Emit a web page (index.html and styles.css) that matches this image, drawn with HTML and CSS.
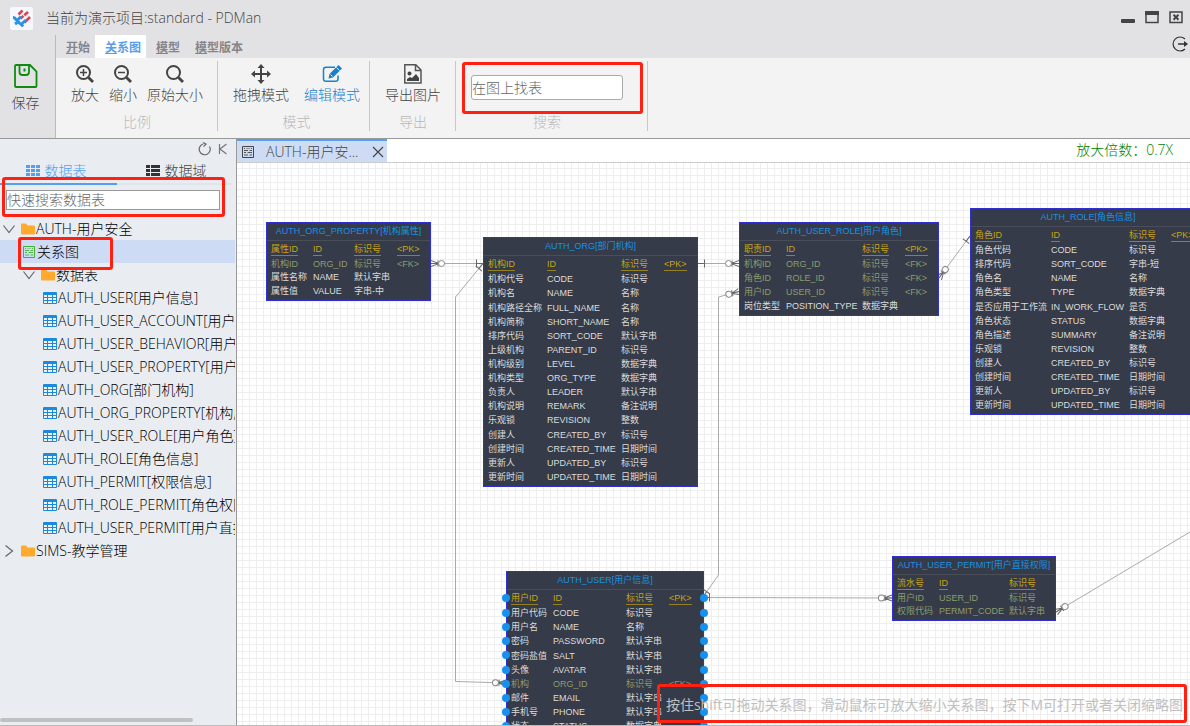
FILE: index.html
```html
<!DOCTYPE html>
<html lang="zh-CN">
<head>
<meta charset="utf-8">
<title>PDMan</title>
<link rel="stylesheet" href="styles.css">
</head>
<body>
<svg class="defs" aria-hidden="true">
  <symbol id="i-table" viewBox="0 0 14 12"><rect x="0" y="0" width="14" height="12" rx="1" fill="#1b8ade"/><path d="M1 3h3v2H1zM5 3h4v2H5zM10 3h3v2h-3zM1 6h3v2H1zM5 6h4v2H5zM10 6h3v2h-3zM1 9h3v2H1zM5 9h4v2H5zM10 9h3v2h-3z" fill="#eef3f8"/></symbol>
  <symbol id="i-folder" viewBox="0 0 14 12"><path d="M0 1.5Q0 .5 1 .5h4l1.5 2H13q1 0 1 1v7q0 1-1 1H1q-1 0-1-1z" fill="#ffa92f"/></symbol>
  <symbol id="i-down" viewBox="0 0 12 12"><path d="M.5 2.5 6 9.500 11.500 2.500" fill="none" stroke="#666" stroke-width="1.200"/></symbol>
  <symbol id="i-right" viewBox="0 0 12 12"><path d="M2.500 .5 9.500 6 2.500 11.500" fill="none" stroke="#666" stroke-width="1.200"/></symbol>
  <symbol id="i-diagram" viewBox="0 0 12 12"><path d="M.5.500h11v11H.5z" fill="none" stroke="currentColor"/><path d="M2.500 2v1M5 2v1M7 2v1M9.500 2v1M2 4.500h4M7.500 4.500H10M2 6.500h2M5.500 6.500H10M2 9h4M7.500 9H10" fill="none" stroke="currentColor" stroke-width=".9"/></symbol>
</svg>

<div class="app">
  <header class="titlebar">
    <svg class="logo" viewBox="0 0 23 23"><rect width="23" height="23" rx="2" fill="#f5f8fc"/><g fill="none" stroke-width="2.600"><path d="M8.500 7.500 12.500 3.500M14.500 15.500 20 10" stroke="#e0414a"/><path d="M10.500 11.500 18 5" stroke="#e0414a" stroke-dasharray="4 1 5"/><path d="M3 10.500q2 0 3 2l4 4q2 1 3 3M7 13.500l4-4M11 17.500l5-4.500M5 17l3-2" stroke="#2c92e8" stroke-width="3"/></g></svg>
    <span class="title">当前为演示项目:standard - PDMan</span>
    <div class="window-buttons">
      <button aria-label="最小化"><svg viewBox="0 0 14 14"><rect y="8" width="14" height="4" rx="1" fill="#444"/></svg></button>
      <button aria-label="最大化"><svg viewBox="0 0 14 14"><path d="M1 1h12v10.500H1z" fill="none" stroke="#444" stroke-width="1.500"/><path d="M0 0h14v4H0z" fill="#444"/></svg></button>
      <button aria-label="关闭"><svg viewBox="0 0 14 14"><path d="M1 1h12v10.500H1z" fill="none" stroke="#444" stroke-width="1.500"/><path d="M4.500 3.800l5 5M9.500 3.800l-5 5" stroke="#444" stroke-width="2"/></svg></button>
    </div>
  </header>

  <div class="top">
    <button class="save"><svg viewBox="0 0 24 24"><path d="M2 1h14l6.500 6.500V22q0 1-1 1H2q-1 0-1-1V2q0-1 1-1zM5.500 1.500V8q0 3 3 3H12q3 0 3-3V1.500" fill="none" stroke="#118a11" stroke-width="1.800"/><path d="M10.500 4.500v3" stroke="#118a11" stroke-width="2"/></svg>保存</button>
    <div class="menu">
      <nav class="menu-tabs">
        <button><u>开</u>始</button>
        <button class="active"><u>关</u>系图</button>
        <button><u>模</u>型</button>
        <button><u>模</u>型版本</button>
        <button class="exit" aria-label="退出"><svg viewBox="0 0 16 16"><path d="M13 3A7 7 0 1 0 13 13" fill="none" stroke="#333" stroke-width="1.200"/><path d="M6 8h7" stroke="#333" stroke-width="1.500"/><path d="M12 5 16 8 12 11z" fill="#333"/></svg></button>
      </nav>
      <div class="ribbon">
        <section class="group">
          <div class="tools">
            <button><svg viewBox="0 0 20 20"><g fill="none" stroke="#444" stroke-width="2"><circle cx="8.500" cy="8.500" r="6.500"/><path d="M13.500 13.500 18 18" stroke-width="2.800"/><path d="M5 8.500h7M8.500 5v7" stroke-width="1.500"/></g></svg>放大</button>
            <button><svg viewBox="0 0 20 20"><g fill="none" stroke="#444" stroke-width="2"><circle cx="8.500" cy="8.500" r="6.500"/><path d="M13.500 13.500 18 18" stroke-width="2.800"/><path d="M5 8.500h7" stroke-width="1.500"/></g></svg>缩小</button>
            <button><svg viewBox="0 0 20 20"><g fill="none" stroke="#444" stroke-width="2"><circle cx="8.500" cy="8.500" r="6.500"/><path d="M13.500 13.500 18 18" stroke-width="2.800"/></g></svg>原始大小</button>
          </div>
          <span class="group-name">比例</span>
        </section>
        <section class="group modes">
          <div class="tools">
            <button><svg viewBox="0 0 20 20"><path d="M10 2v16M2 10h16" stroke="#444" stroke-width="2"/><path d="M10 0l3.500 4h-7zM10 20l3.500-4h-7zM0 10l4-3.500v7zM20 10l-4-3.500v7z" fill="#444"/></svg>拖拽模式</button>
            <button class="on"><svg viewBox="0 0 20 20"><path d="M13 3.200H4Q1.500 3.200 1.500 5.500v9.500q0 2.300 2.500 2.300h9.500q2.500 0 2.500-2.300v-3.500" fill="none" stroke="#1880cc" stroke-width="1.500"/><path d="M16.500 1 20 4.500l-9 9-4.500 1 1-4.500z" fill="#1880cc"/><path d="M14.500 3.500 17.500 6.500M8.500 10.500l2 2" stroke="#f3f3f3" stroke-width="1"/></svg>编辑模式</button>
          </div>
          <span class="group-name">模式</span>
        </section>
        <section class="group export">
          <div class="tools">
            <button><svg viewBox="0 0 20 20"><path d="M1.800.8h11L18 6v13H1.800zM12.500 1v5.500H18" fill="none" stroke="#555" stroke-width="1.500"/><circle cx="6.500" cy="9.500" r="2" fill="#444"/><path d="M4 17v-2l3-2 2 1 4-4 3 4v3z" fill="#444"/></svg>导出图片</button>
          </div>
          <span class="group-name">导出</span>
        </section>
        <section class="group find">
          <input type="text" placeholder="在图上找表" aria-label="在图上找表">
          <span class="group-name">搜索</span>
          <span class="mark mark-find"></span>
        </section>
      </div>
    </div>
  </div>

  <div class="workspace">
    <aside class="sidebar">
      <div class="side-tools">
        <button aria-label="刷新"><svg viewBox="0 0 14 14"><path d="M5 2A5.500 5.500 0 1 0 11.500 4.500M5 .5 8 2.200 5.500 4.500" fill="none" stroke="#666" stroke-width="1.200"/></svg></button>
        <button aria-label="收起"><svg viewBox="0 0 14 14"><path d="M3.500 2v10M10.500 2 4 7l6.500 5" fill="none" stroke="#777" stroke-width="1.200"/></svg></button>
      </div>
      <div class="side-tabs">
        <button class="active"><svg viewBox="0 0 14 12"><path d="M0 0h4v3H0zM5 0h4v3H5zM10 0h4v3h-4zM0 4h4v3H0zM5 4h4v3H5zM10 4h4v3h-4zM0 8h4v3H0zM5 8h4v3H5zM10 8h4v3h-4z" fill="#559ef0"/></svg>数据表</button>
        <button><svg viewBox="0 0 14 12"><path d="M0 0h4v3H0zM5 0h9v3H5zM0 4h4v3H0zM5 4h9v3H5zM0 8h4v3H0zM5 8h9v3H5z" fill="#333"/></svg>数据域</button>
      </div>
      <div class="side-search">
        <input type="text" placeholder="快速搜索数据表" aria-label="快速搜索数据表">
        <span class="mark mark-search"></span>
      </div>
      <ul class="tree">
        <li><svg class="arrow"><use href="#i-down"/></svg><svg class="ico"><use href="#i-folder"/></svg>AUTH-用户安全</li>
        <li class="level1 selected"><svg class="ico green" viewBox="0 0 12 12"><use href="#i-diagram"/></svg>关系图<span class="mark mark-diagram"></span></li>
        <li class="level1"><svg class="arrow"><use href="#i-down"/></svg><svg class="ico"><use href="#i-folder"/></svg>数据表</li>
        <li class="level2"><svg class="ico"><use href="#i-table"/></svg>AUTH_USER[用户信息]</li>
        <li class="level2"><svg class="ico"><use href="#i-table"/></svg>AUTH_USER_ACCOUNT[用户账户]</li>
        <li class="level2"><svg class="ico"><use href="#i-table"/></svg>AUTH_USER_BEHAVIOR[用户行为]</li>
        <li class="level2"><svg class="ico"><use href="#i-table"/></svg>AUTH_USER_PROPERTY[用户属性]</li>
        <li class="level2"><svg class="ico"><use href="#i-table"/></svg>AUTH_ORG[部门机构]</li>
        <li class="level2"><svg class="ico"><use href="#i-table"/></svg>AUTH_ORG_PROPERTY[机构属性]</li>
        <li class="level2"><svg class="ico"><use href="#i-table"/></svg>AUTH_USER_ROLE[用户角色]</li>
        <li class="level2"><svg class="ico"><use href="#i-table"/></svg>AUTH_ROLE[角色信息]</li>
        <li class="level2"><svg class="ico"><use href="#i-table"/></svg>AUTH_PERMIT[权限信息]</li>
        <li class="level2"><svg class="ico"><use href="#i-table"/></svg>AUTH_ROLE_PERMIT[角色权限]</li>
        <li class="level2"><svg class="ico"><use href="#i-table"/></svg>AUTH_USER_PERMIT[用户直接权限]</li>
        <li><svg class="arrow"><use href="#i-right"/></svg><svg class="ico"><use href="#i-folder"/></svg>SIMS-教学管理</li>
      </ul>
      <div class="scrollbar"></div>
    </aside>

    <main class="main">
      <div class="doc-bar">
        <div class="doc-tab"><svg viewBox="0 0 12 12"><use href="#i-diagram"/></svg><span>AUTH-用户安...</span><button aria-label="关闭标签"><svg viewBox="0 0 12 12"><path d="M1 1l10 10M11 1 1 11" stroke="#444" stroke-width="1.200"/></svg></button></div>
        <span class="zoom">放大倍数：0.7X</span>
      </div>
      <div class="canvas" id="canvas">
        <svg class="edges">
          <defs>
            <marker id="many" markerUnits="userSpaceOnUse" markerWidth="16" markerHeight="10" refX="15" refY="5" orient="auto-start-reverse" viewBox="0 0 16 10"><path d="M7 5 15 2M7 5 15 8M8 2v6M7 5h8" fill="none" stroke="#666"/><circle cx="4.500" cy="5" r="3" fill="#fff" stroke="#888"/></marker>
            <marker id="one" markerUnits="userSpaceOnUse" markerWidth="10" markerHeight="10" refX="9" refY="5" orient="auto-start-reverse" viewBox="0 0 10 10"><path d="M2.500 1v8M2 5h7" fill="none" stroke="#666"/></marker>
          </defs>
          <g fill="none" stroke="#aaa">
            <path d="M194 100.500H246" marker-start="url(#many)" marker-end="url(#one)"/>
            <path d="M246 100.500 218.500 134V518.500L269 520" marker-start="url(#one)" marker-end="url(#many)"/>
            <path d="M461 100.500H502" marker-start="url(#one)" marker-end="url(#many)"/>
            <path d="M466 434 481.500 412V134L502 128.500" marker-start="url(#one)" marker-end="url(#many)"/>
            <path d="M702 115 733 73" marker-start="url(#many)" marker-end="url(#one)"/>
            <path d="M466 434.500 655 435" marker-start="url(#one)" marker-end="url(#many)"/>
            <path d="M819 449 953 369" marker-start="url(#many)"/>
          </g>
        </svg>
        <div class="hint">按住shift可拖动关系图，滑动鼠标可放大缩小关系图，按下M可打开或者关闭缩略图<span class="mark mark-hint"></span></div>
      </div>
    </main>
  </div>
</div>
<script src="script.js"></script>
</body>
</html>
```
FILE: styles.css
```css
* { box-sizing: border-box; }
body { margin: 0; font: 300 14px/20px "Open Sans", "Noto Sans CJK SC", sans-serif; color: #444; }
button { margin: 0; padding: 0; border: 0; background: none; font: inherit; color: inherit; }
svg { display: block; flex: none; }
input { font: inherit; color: #444; padding: 0; border: 1px solid #aaa; background: #fff; outline: 0; }
input::placeholder { color: #666; opacity: 1; }
.defs { position: absolute; width: 0; height: 0; }
.app { height: 100vh; display: flex; flex-direction: column; overflow: hidden; border-bottom: 1px solid #bbb; }
.mark { position: absolute; border: 3px solid #ff2012; border-radius: 3px; pointer-events: none; z-index: 5; }

.titlebar { height: 35px; flex: none; display: flex; align-items: center; gap: 13px; padding: 1px 7px 0 10px; background: #e2e2e4; color: #444; }
.logo { width: 23px; height: 23px; }
.window-buttons { margin-left: auto; display: flex; gap: 10px; }
.window-buttons svg { width: 14px; height: 14px; }

.top { flex: none; display: flex; background: #e2e2e4; border-bottom: 1px solid #999; }
.save { width: 56px; padding: 0 4px 25px 0; display: flex; flex-direction: column; align-items: center; justify-content: flex-end; gap: 5px; border-right: 1px solid #bbb; }
.save svg { width: 24px; height: 24px; }
.menu { flex: 1; }
.menu-tabs { height: 23px; display: flex; font-size: 12px; font-weight: bold; color: #85858b; }
.menu-tabs button { padding: 2px 5px 0 10px; font-weight: bold; }
.menu-tabs .active { background: #fff; color: #559ef0; }
.menu-tabs u { text-underline-offset: 1px; }
.menu-tabs .exit { margin-left: auto; padding: 0 2px; }
.exit svg { width: 16px; height: 16px; margin-top: -5px; }
.ribbon { display: flex; height: 80px; padding-top: 3px; background: #f3f3f3; }
.group { position: relative; height: 70px; padding: 3px 9px 0 10px; border-right: 1px solid #c8c8c8; display: flex; flex-direction: column; align-items: center; justify-content: space-between; }
.tools { display: flex; }
.tools button { padding: 0 5px; display: flex; flex-direction: column; align-items: center; gap: 1px; }
.tools svg { width: 20px; height: 20px; }
.modes { padding-right: 4px; }
.modes .tools { gap: 5px; }
.export { padding-right: 9px; }
.tools .on { color: #1880cc; }
.group-name { color: #b8b8b8; line-height: 18px; }
.find { padding: 14px 24px 0 15px; }
.find input { width: 152px; height: 25px; border-radius: 3px; }
.mark-find { left: 6px; top: 1px; width: 181px; height: 52px; }

.workspace { flex: 1; min-height: 0; display: flex; }
.sidebar { width: 237px; flex: none; display: flex; flex-direction: column; background: #e9edf2; border-right: 1px solid #999; }
.side-tools { height: 20px; display: flex; justify-content: flex-end; align-items: center; gap: 4px; padding-right: 6px; }
.side-tools svg { width: 14px; height: 14px; }
.side-tabs { display: flex; height: 26px; padding-right: 4px; }
.side-tabs button { flex: 1; display: flex; align-items: center; justify-content: center; gap: 5px; padding-left: 3px; border-bottom: 2px solid #dfe5ec; }
.side-tabs .active { color: #559ef0; border-color: #559ef0; padding: 0 5px 0 0; }
.side-tabs svg { width: 14px; height: 12px; }
.side-search { position: relative; display: flex; padding: 5px 16px 7px 6px; }
.side-search input { flex: 1; min-width: 0; height: 20px; border-color: #999; }
.mark-search { left: 2px; top: -8px; width: 223px; height: 40px; }
.tree { list-style: none; margin: 0; padding: 0; flex: 1; min-height: 0; color: #000; }
.tree li { height: 23px; display: flex; align-items: center; padding-left: 3px; gap: 1px; white-space: nowrap; position: relative; width: 235px; clip-path: inset(-9px 0); }
.tree .level1 { padding-left: 23px; }
.tree .level1.selected { padding-left: 22px; background: #cddcf4; z-index: 1; }
.tree .level2 { padding-left: 43px; }
.arrow { width: 12px; height: 12px; margin-right: 5px; }
.ico { width: 14px; height: 12px; }
.green { color: #45b035; }
.mark-diagram { left: 18px; top: -3px; width: 95px; height: 33px; }
.scrollbar { width: 193px; height: 4px; margin-bottom: 3px; border-radius: 2px; background: #c1c1c1; }

.main { flex: 1; min-width: 0; display: flex; flex-direction: column; }
.doc-bar { height: 24px; flex: none; display: flex; justify-content: space-between; background: #fff; border-bottom: 1px solid #ccc; }
.doc-tab { width: 150px; display: flex; align-items: center; padding: 0 3px 0 5px; border-top: 2px solid #559ef0; background: #cddcf4; color: #444; }
.doc-tab svg { width: 12px; height: 12px; }
.doc-tab span { margin-left: 12px; flex: 1; white-space: nowrap; }
.zoom { color: #008000; padding: 1px 17px 0 0; }
.canvas { position: relative; flex: 1; min-height: 0; overflow: hidden; background: repeating-linear-gradient(90deg, transparent 0 5px, #eee 5px 6px, transparent 6px 7px), repeating-linear-gradient(#fff 0 5px, #eee 5px 6px, #fff 6px 7px); }
.edges { position: absolute; inset: 0; width: 100%; height: 100%; }
.hint { position: absolute; right: 7px; bottom: 10px; color: #c0c0c0; font-weight: 400; white-space: nowrap; z-index: 2; }
.mark-hint { right: -4px; top: -11px; width: 530px; height: 39px; }

.node { position: absolute; background: #353b48; border: 1px solid #3030d0; font: 9px/12px "Liberation Sans", "Noto Sans CJK SC", sans-serif; color: #dcdcdc; }
.node h3 { margin: 0; height: 18px; font: inherit; line-height: 17px; text-align: center; color: #1b90e0; border-bottom: 1px solid #4a4e58; white-space: nowrap; }
.node table { margin: 1px 0 2px; width: 100%; table-layout: fixed; border-collapse: collapse; }
.node td { position: relative; padding: 0 0 0 4px; white-space: nowrap; vertical-align: middle; }
.node td + td { padding-left: 3px; }
.node .pk { color: #c8a415; }
.node .pk span { display: inline-block; line-height: 12px; border-bottom: 1px solid #96801e; }
.node .fk { color: #8d9b6c; }
.selected-node td:first-child::before, .selected-node td:last-child::after { content: ""; position: absolute; top: 3px; width: 8px; height: 8px; border-radius: 50%; background: #1790ee; }
.selected-node td:first-child::before { left: -5px; }
.selected-node td:last-child::after { right: -5px; }
```
FILE: script.js
```js
// Entities: position, width, body height, column widths, rows (name, code, type, key)
const nodes = [
  { x: 29, y: 59, w: 165, h: 56, cols: [42, 41, 43], title: 'AUTH_ORG_PROPERTY[机构属性]', rows: [
    '属性ID,ID,标识号,PK', '机构ID,ORG_ID,标识号,FK', '属性名称,NAME,默认字串', '属性值,VALUE,字串-中'] },
  { x: 246, y: 74, w: 215, h: 227, cols: [59, 74, 43], title: 'AUTH_ORG[部门机构]', rows: [
    '机构ID,ID,标识号,PK', '机构代号,CODE,标识号', '机构名,NAME,名称', '机构路径全称,FULL_NAME,名称',
    '机构简称,SHORT_NAME,名称', '排序代码,SORT_CODE,默认字串', '上级机构,PARENT_ID,标识号', '机构级别,LEVEL,数据字典',
    '机构类型,ORG_TYPE,数据字典', '负责人,LEADER,默认字串', '机构说明,REMARK,备注说明', '乐观锁,REVISION,整数',
    '创建人,CREATED_BY,标识号', '创建时间,CREATED_TIME,日期时间', '更新人,UPDATED_BY,标识号', '更新时间,UPDATED_TIME,日期时间'] },
  { x: 502, y: 59, w: 200, h: 71, cols: [42, 76, 43], title: 'AUTH_USER_ROLE[用户角色]', rows: [
    '职责ID,ID,标识号,PK', '机构ID,ORG_ID,标识号,FK', '角色ID,ROLE_ID,标识号,FK', '用户ID,USER_ID,标识号,FK', '岗位类型,POSITION_TYPE,数据字典'] },
  { x: 733, y: 45, w: 236, h: 184, cols: [76, 78, 42], title: 'AUTH_ROLE[角色信息]', rows: [
    '角色ID,ID,标识号,PK', '角色代码,CODE,标识号', '排序代码,SORT_CODE,字串-短', '角色名,NAME,名称', '角色类型,TYPE,数据字典',
    '是否应用于工作流,IN_WORK_FLOW,是否', '角色状态,STATUS,数据字典', '角色描述,SUMMARY,备注说明', '乐观锁,REVISION,整数',
    '创建人,CREATED_BY,标识号', '创建时间,CREATED_TIME,日期时间', '更新人,UPDATED_BY,标识号', '更新时间,UPDATED_TIME,日期时间'] },
  { x: 269, y: 408, w: 198, h: 142, cols: [42, 73, 43], selected: true, title: 'AUTH_USER[用户信息]', rows: [
    '用户ID,ID,标识号,PK', '用户代码,CODE,标识号', '用户名,NAME,名称', '密码,PASSWORD,默认字串', '密码盐值,SALT,默认字串',
    '头像,AVATAR,默认字串', '机构,ORG_ID,标识号,FK', '邮件,EMAIL,默认字串', '手机号,PHONE,默认字串', '状态,STATUS,数据字典'] },
  { x: 655, y: 393, w: 164, h: 42, cols: [42, 70, 43], title: 'AUTH_USER_PERMIT[用户直接权限]', rows: [
    '流水号,ID,标识号,PK,hide', '用户ID,USER_ID,标识号,FK,hide', '权限代码,PERMIT_CODE,默认字串,FK,hide'] }
];

const canvas = document.getElementById('canvas');
for (const n of nodes) {
  const rows = n.rows.map(r => {
    const [name, code, type, key, hide] = r.split(',');
    const label = key && !hide ? `&lt;${key}&gt;` : '';
    const cells = [name, code, type, label].map(t => `<td>${t ? `<span>${t}</span>` : ''}</td>`).join('');
    return `<tr class="${key ? key.toLowerCase() : ''}">${cells}</tr>`;
  }).join('');
  const cols = n.cols.map((w, i) => `<col style="width:${i ? w : w + 1}px">`).join('') + '<col>';
  const el = document.createElement('section');
  el.className = n.selected ? 'node selected-node' : 'node';
  el.style.cssText = `left:${n.x}px;top:${n.y}px;width:${n.w}px`;
  el.innerHTML = `<h3>${n.title}</h3><table style="height:${n.h}px"><colgroup>${cols}</colgroup><tbody>${rows}</tbody></table>`;
  canvas.appendChild(el);
}
```
